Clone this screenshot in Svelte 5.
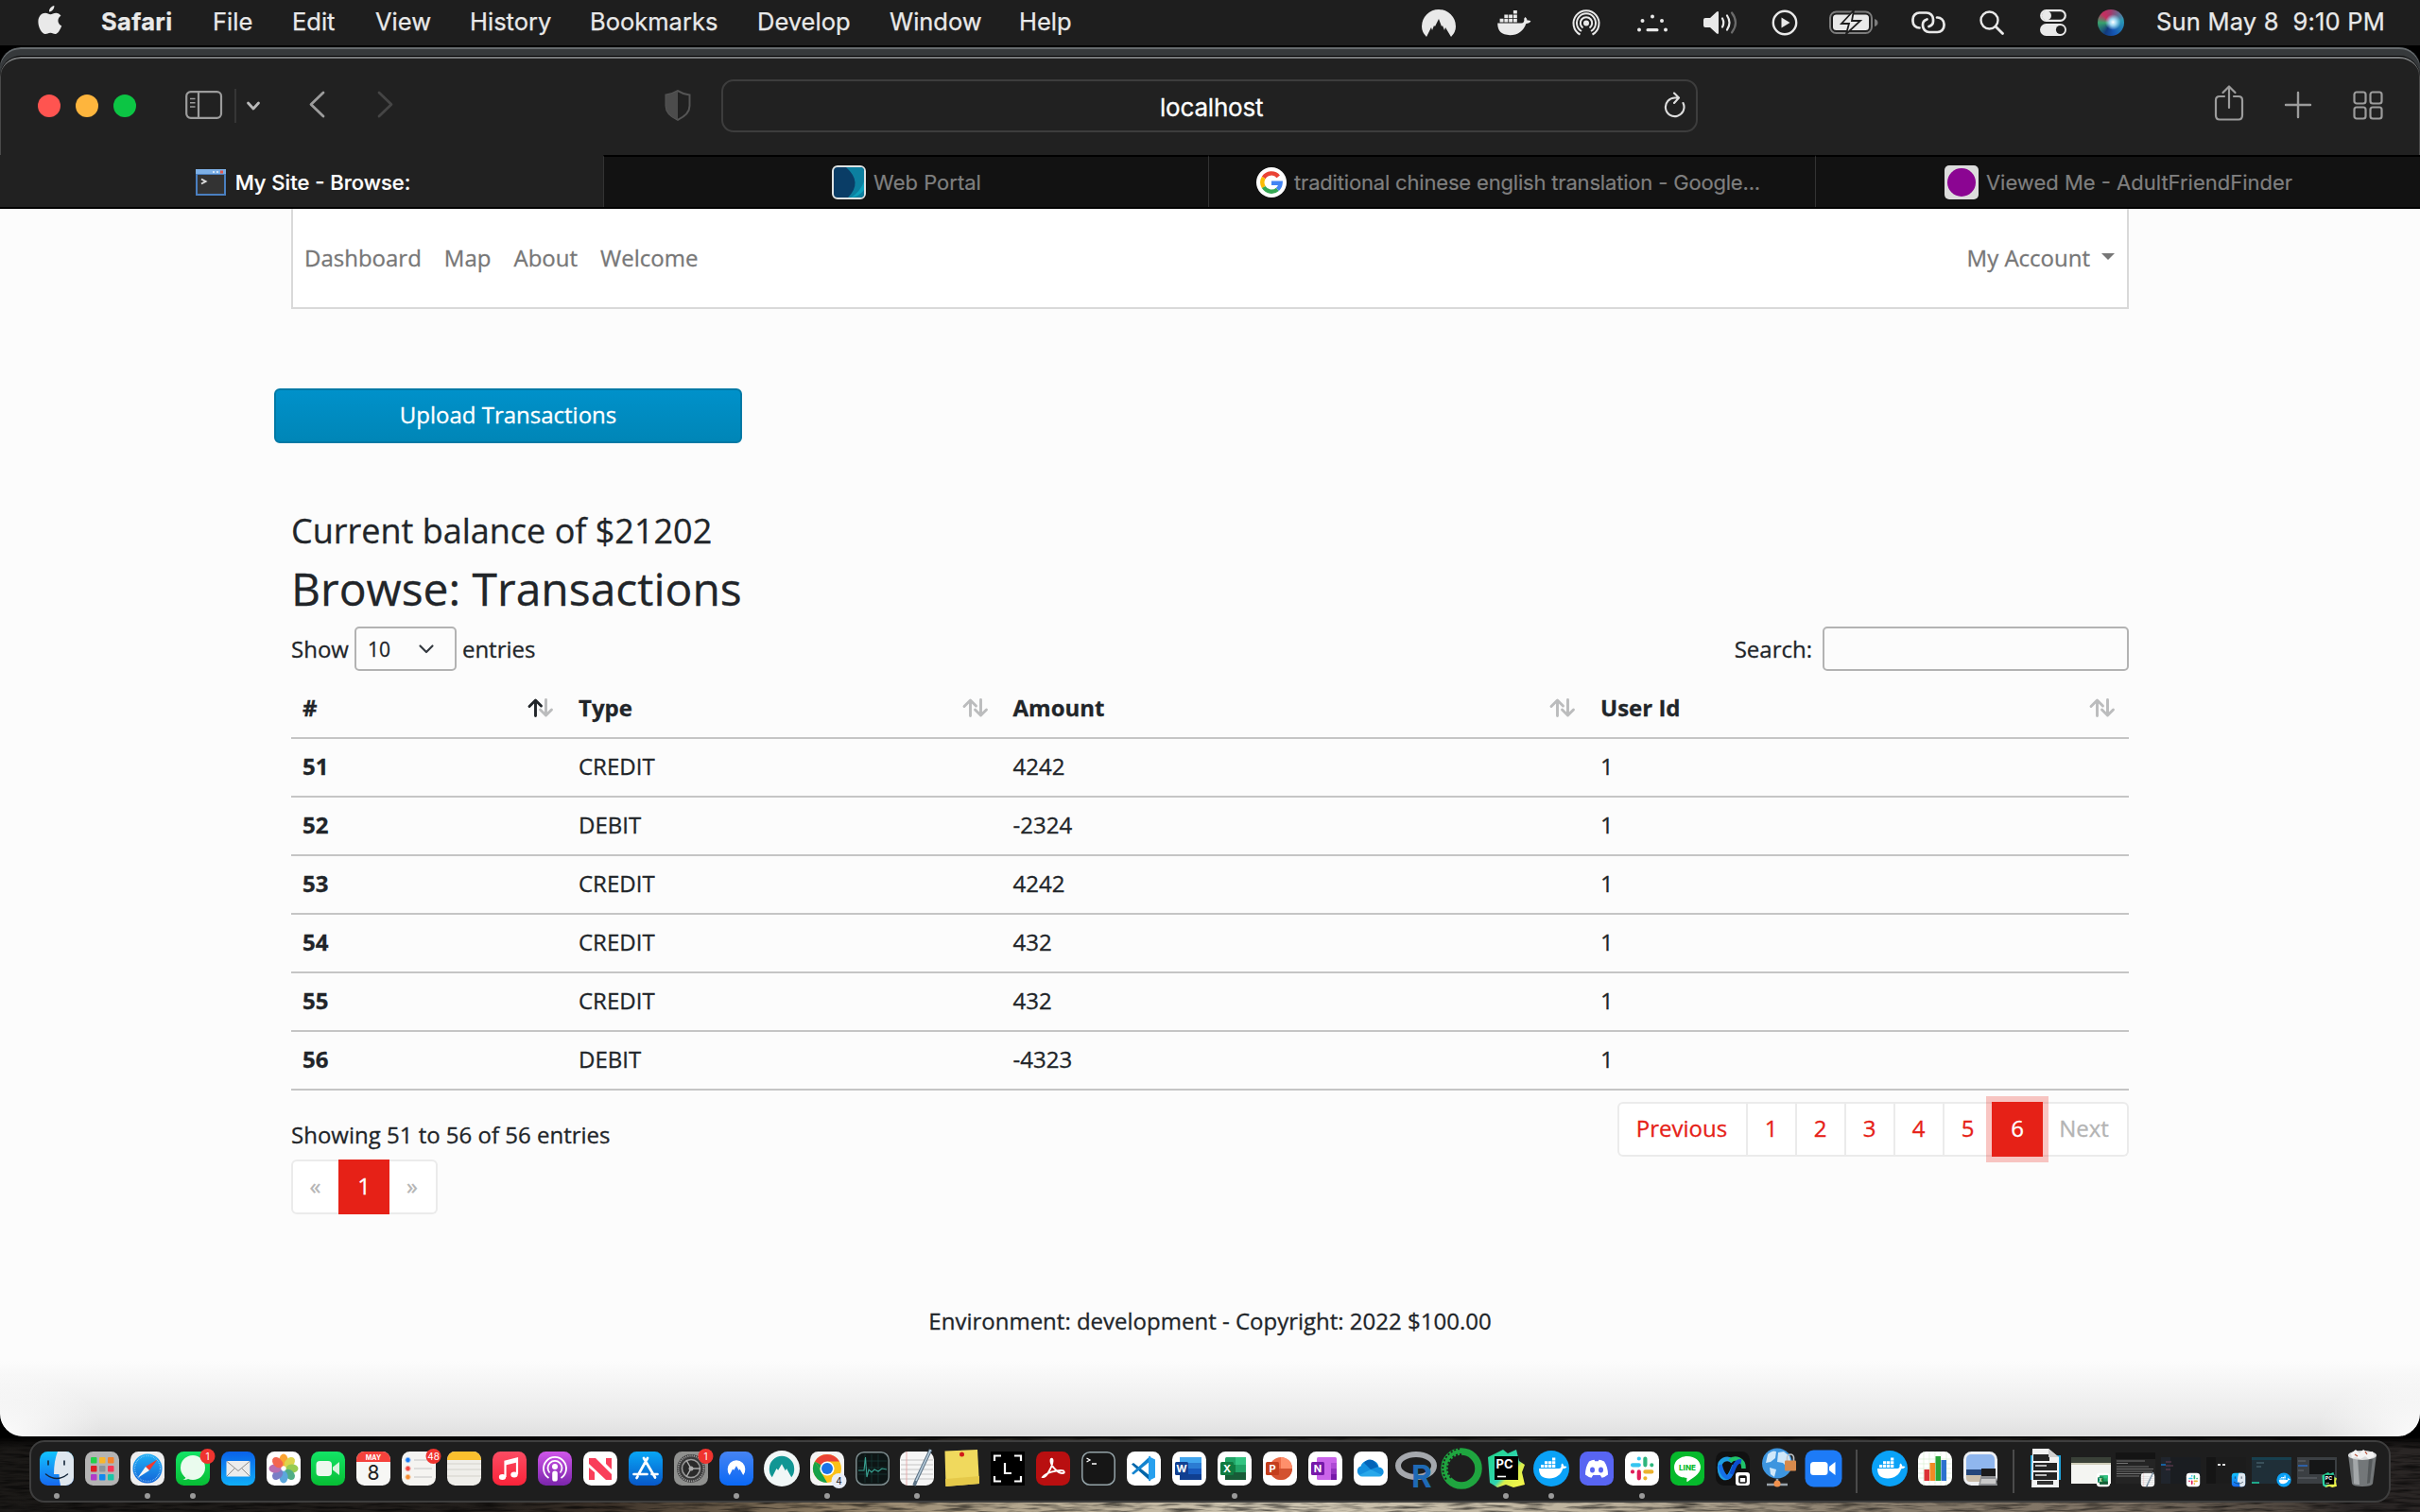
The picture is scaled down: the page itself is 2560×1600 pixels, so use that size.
<script>
  const menus = ['File', 'Edit', 'View', 'History', 'Bookmarks', 'Develop', 'Window', 'Help'];

  const rows = [
    [51, 'CREDIT', '4242', 1],
    [52, 'DEBIT', '-2324', 1],
    [53, 'CREDIT', '4242', 1],
    [54, 'CREDIT', '432', 1],
    [55, 'CREDIT', '432', 1],
    [56, 'DEBIT', '-4323', 1]
  ];
  const columns = ['#', 'Type', 'Amount', 'User Id'];

  // Rounded app tile, 36 units wide inside a 40 unit box
  const tile = (fill, inner = '') => `<rect x="2" y="2" width="36" height="36" rx="8.5" fill="${fill}"/>${inner}`;
  const whale = (fill) =>
    `<path fill="${fill}" d="M7 20h21c2 0 3-1.500 2.500-4l1-1.500c1.300 1 1.700 2 1.700 3 1.300-.3 2.500 0 3.300.6-.8 1.700-2.300 2.200-4.200 2.200C30 27 25 30.500 18 30.500 10.500 30.500 7 27 7 20z"/><path fill="${fill}" d="M9 16h3.300v3H9zM13 16h3.300v3H13zM17 16h3.300v3H17zM21 16h3.300v3H21zM13 12.300h3.300v3H13zM17 12.300h3.300v3H17zM21 12.300h3.300v3H21zM21 8.600h3.300v3H21z"/>`;
  const peaks = 'M8 31 Q4 26 4.500 20 A15.500 15.500 0 0 1 35.500 20 Q36 26 32 31 L26 20 24.500 22.500 20 14.500 15.500 22 13.500 20z';
  const badge = (n) => `<circle cx="35.500" cy="7" r="8" fill="#f0342f"/><text x="35.500" y="10.600" font-size="10" fill="#fff" text-anchor="middle">${n}</text>`;
  const office = (dark, letter, shape) =>
    tile('#fff', `${shape}<rect x="5" y="13" width="14" height="14" rx="1.500" fill="${dark}"/><text x="12" y="24" font-size="11" font-weight="700" fill="#fff" text-anchor="middle">${letter}</text>`);
  const finderArt = tile('url(#gFinder)', `<path d="M21 2h8.500A8.500 8.500 0 0 1 38 10.500v19a8.500 8.500 0 0 1-8.500 8.500H24q-1.500-6-1.500-12H17Q17 12 21 2z" fill="#dfe7ef"/><path d="M11 12v4M28 12v4" stroke="#14263a" stroke-width="1.600" stroke-linecap="round"/><path d="M8.500 26q11.500 9 23 0" fill="none" stroke="#14263a" stroke-width="1.500" stroke-linecap="round"/>`);
  const slackArt = tile('#fff', `<g stroke-width="4.200" stroke-linecap="round"><path d="M16.800 9.500h.01M16.800 16.300H10" stroke="#36c5f0"/><path d="M23.400 9.500v6.800M30.300 16.300h.01" stroke="#2eb67d"/><path d="M23.400 23.400h6.900M23.400 30.300h.01" stroke="#ecb22e"/><path d="M16.800 23.400v6.900M10 23.400h.01" stroke="#e01e5a"/></g>`);
  const pycharmArt = `<path d="M1 8 17 0l5 4 9-4 3 12 6 4-3 8 3 13-12 3-8-3-9 3-8-5z" fill="url(#gPy)"/><rect x="8" y="7" width="25" height="25" fill="#000"/><text x="9.500" y="20" font-size="13" font-weight="700" fill="#fff">PC</text><path d="M11 28.500h9" stroke="#fff" stroke-width="1.600"/>`;
  const dockerArt = `<circle cx="20" cy="20" r="19" fill="#0aa2f7"/>${whale('#fff')}`;
  const editArt = tile('#f6f6f6', `<path d="M3 11h34M3 16h34M3 21h34M3 26h34M3 31h34" stroke="#b9b9b9" stroke-width=".8"/><path d="M9 2v36" stroke="#e7a0a0" stroke-width=".8"/><path d="M34.500 0 19 33l-2 5" stroke="#5d7386" stroke-width="3.600"/><path d="M34.500 0 19 33" stroke="#bdd1df" stroke-width="1.500"/>`);
  const excelArt = office('#107c41', 'X', '<rect x="10" y="8" width="22" height="24" rx="1.500" fill="#21a366"/><path d="M21 8h11v8H21z" fill="#33c481"/><path d="M10 16h11v8H10z" fill="#107c41"/><path d="M10 24h22v8H10z" fill="#185c37"/>');

  const thumb = (bg, inner, app) =>
    `<rect x="-1" y="8" width="42" height="28" fill="${bg}"/>${inner}<g transform="translate(25 24) scale(.4)">${app}</g>`;

  const apps = [
    { art: finderArt, open: true },
    { art: tile('#b4b4b4', '<rect x="8" y="8" width="6.500" height="6.500" rx="1" fill="#23d14b"/><rect x="17" y="8" width="6.500" height="6.500" rx="1" fill="#f8b62c"/><rect x="26" y="8" width="6.500" height="6.500" rx="1" fill="#f5822a"/><rect x="8" y="17" width="6.500" height="6.500" rx="1" fill="#e01e26"/><rect x="17" y="17" width="6.500" height="6.500" rx="1" fill="#8c959b"/><rect x="26" y="17" width="6.500" height="6.500" rx="1" fill="#f83657"/><rect x="8" y="26" width="6.500" height="6.500" rx="1" fill="#b03bc9"/><rect x="17" y="26" width="6.500" height="6.500" rx="1" fill="#1288ee"/><rect x="26" y="26" width="6.500" height="6.500" rx="1" fill="#18c5a6"/>') },
    { art: tile('#eeeeef', '<circle cx="20" cy="20" r="15.500" fill="url(#gBlue)"/><circle cx="20" cy="20" r="13.500" fill="none" stroke="#9fd3f7" stroke-width="1.300" stroke-dasharray=".6 1.100"/><path d="M30.500 10.500 18 18l4 4z" fill="#f2392f"/><path d="M9.500 30 22 22l-4-4z" fill="#f4f4f4"/>'), open: true },
    { art: tile('url(#gGreen)', `<circle cx="20" cy="19" r="13" fill="#eafbee"/><path d="M13 27q0 4-3.500 5 5 .5 8-3z" fill="#e3f8e8"/>${badge('1')}`), open: true },
    { art: tile('url(#gMail)', '<rect x="7.500" y="12" width="25" height="16.500" rx="1" fill="#ececec"/><path d="m8 12.500 12 10 12-10M8 28l8.500-8.500M32 28l-8.500-8.500" fill="none" stroke="#8d8d8d" stroke-width="1"/>') },
    { art: tile('#fff', '<g opacity=".9"><ellipse cx="20" cy="11" rx="4.600" ry="6.500" fill="#fb9b1c"/><ellipse cx="20" cy="11" rx="4.600" ry="6.500" fill="#d9d03a" transform="rotate(45 20 20)"/><ellipse cx="20" cy="11" rx="4.600" ry="6.500" fill="#8cc63f" transform="rotate(90 20 20)"/><ellipse cx="20" cy="11" rx="4.600" ry="6.500" fill="#3fa578" transform="rotate(135 20 20)"/><ellipse cx="20" cy="11" rx="4.600" ry="6.500" fill="#4a9ed9" transform="rotate(180 20 20)"/><ellipse cx="20" cy="11" rx="4.600" ry="6.500" fill="#6b6fc0" transform="rotate(225 20 20)"/><ellipse cx="20" cy="11" rx="4.600" ry="6.500" fill="#b25fa8" transform="rotate(270 20 20)"/><ellipse cx="20" cy="11" rx="4.600" ry="6.500" fill="#f2553d" transform="rotate(315 20 20)"/></g>') },
    { art: tile('url(#gGreen)', '<rect x="7.500" y="12" width="16.500" height="16" rx="4" fill="#edf8ef"/><path d="M25 18.500 32 13v14l-7-5.500z" fill="#d8f3dd"/>') },
    { art: tile('#f7f7f5', '<path d="M2 13v-2.500A8.500 8.500 0 0 1 10.500 2h19A8.500 8.500 0 0 1 38 10.500V13z" fill="#f5423c"/><text x="20" y="10.800" font-size="7" font-weight="700" fill="#fff" text-anchor="middle">MAY</text><text x="20" y="32" font-size="21" fill="#222" text-anchor="middle">8</text>') },
    { art: tile('#f5f4f1', `<path d="M15 11h19M15 20h19M15 29h19" stroke="#c4c4c4" stroke-width="1"/><circle cx="8.500" cy="11" r="2.700" fill="#1679f6" stroke="#a9cbf6"/><circle cx="8.500" cy="20" r="2.700" fill="#f3433e" stroke="#f6b5b2"/><circle cx="8.500" cy="29" r="2.700" fill="#f68b30" stroke="#f6d0ab"/>${badge('48')}`) },
    { art: tile('#efeeea', '<path d="M2 11v-.5A8.500 8.500 0 0 1 10.500 2h19A8.500 8.500 0 0 1 38 10.500V11z" fill="#fbc02e"/><path d="M2 15h36M2 21h36M2 28h36" stroke="#d3d1ca" stroke-width="1"/>') },
    { art: tile('url(#gMusic)', '<path d="M15.500 29V12.500L28 9.500V26" fill="none" stroke="#fff" stroke-width="2.200"/><path d="M15.500 13 28 10v3.500l-12.500 3z" fill="#fff"/><ellipse cx="12.500" cy="29" rx="3.700" ry="3" fill="#fff"/><ellipse cx="25" cy="26.500" rx="3.700" ry="3" fill="#fff"/>') },
    { art: tile('url(#gPod)', '<g fill="none" stroke="#fff" stroke-width="1.800"><path d="M13.500 30a12 12 0 1 1 13 0"/><path d="M14.500 24.500a7.500 7.500 0 1 1 11 0"/></g><circle cx="20" cy="18" r="3" fill="#fff"/><rect x="17.200" y="22.500" width="5.600" height="11" rx="2.600" fill="#fff"/>') },
    { art: tile('#fff', '<path d="M8 9h7l17 17v6h-6L8 15z" fill="#f93e5a"/><path d="M8 19v13h6V24zM32 21V9h-6v6z" fill="#f93e5a"/>') },
    { art: tile('url(#gStore)', '<path d="m22 9-9.500 17M18 9l12 20.500M7.500 26h14M26.500 26h6M11.500 28.500 10.500 30" stroke="#fff" stroke-width="2.700" stroke-linecap="round"/>') },
    { art: tile('#8f908e', `<circle cx="20" cy="20" r="15" fill="#3b3b3b"/><circle cx="20" cy="20" r="13.500" fill="none" stroke="#9c9c9c" stroke-width="2" stroke-dasharray="1.200 1"/><circle cx="20" cy="20" r="9.500" fill="#2a2a2a" stroke="#9c9c9c" stroke-width="1.500"/><path d="M20 20 15 11M20 20h10M20 20l-5 9" stroke="#aaa" stroke-width="1.500"/><circle cx="20" cy="20" r="2.500" fill="#aaa"/>${badge('1')}`) },
    { art: tile('url(#gNord)', `<g transform="translate(8 8.500) scale(.6)"><path d="${peaks}" fill="#fff"/></g>`), open: true },
    { art: `<circle cx="20" cy="20" r="19" fill="#f1f7f7"/><g transform="translate(3 3) scale(.85)"><path d="${peaks}" fill="#119694"/></g>` },
    { art: tile('#f4f4f4', '<circle cx="20" cy="20" r="15" fill="#fbc116"/><path d="M20 20 7 12.500A15 15 0 0 1 33 12.500H20z" fill="#ea4335"/><path d="M7 12.500 20 35A15 15 0 0 1 7 12.500z" fill="#15a24a"/><path d="m7 12.500 6.500 11.300L20 20z" fill="#15a24a"/><circle cx="20" cy="20" r="7.600" fill="#fff"/><circle cx="20" cy="20" r="6" fill="#1a73e8"/><circle cx="32.500" cy="33" r="8" fill="#e8edf7"/><text x="32.500" y="36.500" font-size="10" fill="#222" text-anchor="middle">4</text>'), open: true },
    { art: tile('#0d1515', '<rect x="2.800" y="2.800" width="34.400" height="34.400" rx="8" fill="none" stroke="#7e8c8e" stroke-width="1.500"/><path d="M5 12h30M5 19h30M5 26h30M12 5v30M19 5v30M26 5v30" stroke="#183c39" stroke-width=".7"/><path d="M5 22h6l1.500-14L14 29l2-8 3 3 3-3 4 2 4-3 5 1" fill="none" stroke="#39a493" stroke-width="1.100"/>') },
    { art: editArt, open: true },
    { art: '<path d="M1.500 1.500 36 0l2 36L2.500 39z" fill="#f0d95d"/><path d="M2 31 38 28v8L2.500 39z" fill="#e5c94a"/><circle cx="19.500" cy="5" r="2.500" fill="#d21a1a"/>' },
    { art: '<rect x="2" y="2" width="36" height="36" fill="#000"/><path d="M6 12V6.500h7M27 6.500h7V12M6 28v5.500h7M27 33.500h7V28" fill="none" stroke="#fff" stroke-width="2.200"/><path d="M17 14v11h7" fill="none" stroke="#fff" stroke-width="2.200"/>' },
    { art: tile('#b90f10', '<path d="M9 29c3 1 10-9 10.500-17 .2-3-2-3-2 0 .2 6 8 13 12.500 13 3 0 2-3-1-3-6-.2-16 2-20 7z" fill="none" stroke="#fff" stroke-width="1.900"/>') },
    { art: tile('#161616', '<rect x="2.800" y="2.800" width="34.400" height="34.400" rx="8" fill="none" stroke="#94a3a8" stroke-width="1.500"/><path d="m7.500 9 3.500 2-3.500 2M13 15h5" fill="none" stroke="#fff" stroke-width="1.300"/>') },
    { art: tile('#fff', '<path d="M7 15.500 9 14l18 14v5.500z" fill="#0065a9"/><path d="M7 25 9 26.500 27 12V6.500z" fill="#1383cf"/><path d="m25 7 7 3.500v19L25 33z" fill="#27a0ee"/>') },
    { art: office('#103f91', 'W', '<rect x="10" y="8" width="23" height="24" rx="1.500" fill="#2b7cd3"/><path d="M10 8h23v6H10z" fill="#41a5ee"/><path d="M10 20h23v6H10z" fill="#185abd"/><path d="M10 26h23v6H10z" fill="#103f91"/>') },
    { art: excelArt, open: true },
    { art: office('#c43e1c', 'P', '<circle cx="21" cy="20" r="12" fill="#ed6c47"/><path d="M21 8a12 12 0 0 1 12 12H21z" fill="#ff8f6b"/><path d="M9 20h24a12 12 0 0 1-24 0z" fill="#d35230"/>') },
    { art: office('#7719aa', 'N', '<rect x="11" y="8" width="21" height="24" rx="1.500" fill="#ca64ea"/><path d="M26 14h6v6h-6z" fill="#ae4bd5"/><path d="M26 20h6v6h-6z" fill="#9332bf"/><path d="M26 26h6v6h-6z" fill="#7719aa"/>') },
    { art: tile('#fff', '<path d="M10 28a5.500 5.500 0 0 1-.5-10.500 7 7 0 0 1 8-5.500 8 8 0 0 1 11 6.500c7 .5 6.500 9.500 1 9.500z" fill="#1490df"/><path d="M13 14c2-4 9-5 12 0l3 4-8 3z" fill="#0364b8"/><path d="m8 27 12-6 12 6q-1 1.500-3 1.500H11Q9 28.500 8 27z" fill="#28a8ea"/>') },
    { art: '<ellipse cx="20" cy="17" rx="19" ry="12" fill="none" stroke="#a5a8ad" stroke-width="6"/><text x="15" y="40" font-size="33" font-weight="700" fill="#1f6ab5">R</text>' },
    { art: '<circle cx="20" cy="20" r="18" fill="none" stroke="#1fa53f" stroke-width="7.500"/><path d="M18-1A21 21 0 0 0 5 33" fill="none" stroke="#1e1e1e" stroke-width="1.800" stroke-dasharray="2 2"/><path d="M20 5A15 15 0 0 0 9 30" fill="none" stroke="#1e1e1e" stroke-width="2" stroke-dasharray="2 2"/>' },
    { art: pycharmArt, open: true },
    { art: dockerArt, open: true },
    { art: tile('#5865f2', '<path d="M12 12.500q3-1.500 5.500-1.700l.8 1.500h3.400l.8-1.500q2.500.2 5.500 1.700 4 6 4 14-3 2.500-6.500 3.200l-1.700-2.700h-7.600L14.500 29.700Q11 29 8 26.500q0-8 4-14z" fill="#fff"/><ellipse cx="15.500" cy="21.500" rx="2.500" ry="2.900" fill="#5865f2"/><ellipse cx="24.500" cy="21.500" rx="2.500" ry="2.900" fill="#5865f2"/>') },
    { art: slackArt, open: true },
    { art: tile('#06b92c', '<path d="M20 7c8 0 14 5 14 11.500C34 26 24 31 20 34c-.5.300-1-.3-.5-4C11 30 6 25 6 18.500 6 12 12 7 20 7z" fill="#fff"/><text x="20" y="22" font-size="8" font-weight="800" fill="#06b92c" text-anchor="middle">LINE</text>') },
    { art: tile('#111', '<path d="M20 12.500C14 7 6 11 6 19c0 6 2.500 11 6.500 11 4.500 0 6-6 9-13" fill="none" stroke="#1f9de0" stroke-width="4.600"/><path d="M6.500 16C9 28 15 33 18 26" fill="none" stroke="#1470e8" stroke-width="4.600"/><path d="M17 12c5-5 15-2 14.500 8" fill="none" stroke="#20c36b" stroke-width="4.600"/><path d="M29 12.500c-6-1-8 7-10.500 13.500" fill="none" stroke="#0b4fd1" stroke-width="4.600"/><rect x="23" y="24" width="15" height="14" rx="3" fill="#fff"/><rect x="27" y="28" width="7" height="7" rx="1" fill="none" stroke="#111" stroke-width="1.600"/><path d="M27 29h7" stroke="#111" stroke-width="2"/>') },
    { art: '<circle cx="19" cy="14.500" r="16" fill="#3d95df"/><path d="M9 5q5-5 9-3l-1 7-5 4-5 1zM20 3l6-1 6 5 2 8-4 4-5-5-6-1zM11 19l7 2-2 8-4-3z" fill="#cfe8fa"/><path d="M19 31v5M8 37h22" stroke="#9aa3aa" stroke-width="2.500"/><circle cx="19" cy="36" r="3.500" fill="#f1914d"/><path d="M29.500 12V8.500a3.500 3.500 0 0 1 7 0V12" fill="none" stroke="#bfc4c8" stroke-width="1.700"/><rect x="27" y="11.500" width="12" height="11" rx="1" fill="#d88a4c"/>' },
    { art: '<rect x=".5" y=".5" width="39" height="39" rx="9" fill="#1d7bf7"/><rect x="6" y="13" width="18.500" height="14" rx="3.500" fill="#fff"/><path d="m26 18 6.500-5v14L26 22z" fill="#fff"/>' }
  ];

  const recents = [
    { art: dockerArt },
    { art: tile('#fff', '<path d="M2 10h36M2 15h36M2 20h36M2 25h36M2 30h36M8 2v36M14 2v36M20 2v36M26 2v36M32 2v36" stroke="#d8efd3" stroke-width=".7"/><path d="M8.500 21H14v12H8.500z" fill="#dd3237"/><path d="M14.500 14H20v19h-5.500z" fill="#f28a25"/><path d="M20.500 7H26v26h-5.500z" fill="#28a537"/><path d="M26.500 11H32v22h-5.500z" fill="#2d72cf"/>') },
    { art: tile('#eef0f3', '<path d="M5 10a5 5 0 0 1 5-5h20a5 5 0 0 1 5 5v14H5z" fill="#8fb6ee"/><path d="M5 21h30v7H5z" fill="#24477c"/><path d="M5 27h25v7H9q-4 0-4-4z" fill="#c9bda9"/><path d="M22 22h13l3 16H18z" fill="#8d8f92"/><path d="M21 20h15v8H21z" fill="#1b1b1c"/><path d="M21 31h15v5H20z" fill="#c9c9c9"/>') }
  ];

  const minimized = [
    { art: '<path d="M4 6h32v26H4z" fill="#1ea4dd"/><path d="M6-1h17l11 9v32H5z" fill="#f2f2f2"/><path d="M7 5h17v7H7zM7 14h25v8H7zM7 24h25v8H7z" fill="#242424"/><path d="M9 17h12M9 27h12" stroke="#bbb" stroke-width="2"/><path d="M11 35h17" stroke="#333" stroke-width="4"/><path d="M23-1v9h11z" fill="#cfcfcf"/>' },
    { art: thumb('#f4f5f2', '<path d="M-1 8h42v6H-1z" fill="#3a4138"/><path d="M-1 14h42v2H-1z" fill="#cfcdb9"/>', excelArt) },
    { art: thumb('#242424', '<path d="M-1 3h42v7H-1z" fill="#141414"/><path d="M0 12h30M0 14.500h12M0 18h34M0 20.500h39M0 23h38M0 25.500h36M0 28h24" stroke="#858585" stroke-width=".8"/>', editArt) },
    { art: thumb('#1a1d21', '<path d="M-1 8h10v28H-1z" fill="#20252d"/><path d="M4 13h6M4 17h8M4 21h5" stroke="#6c4159" stroke-width="1"/><path d="M-1 16h5" stroke="#1673c4" stroke-width="1.500"/>', slackArt) },
    { art: thumb('#1c1c1c', '<path d="M-1 8h10v28H-1z" fill="#151515"/><path d="M11 15h3v2h-3zM16 15h3v2h-3z" fill="#ddd"/>', finderArt) },
    { art: thumb('#1f2f38', '<path d="M-1 8h42v3H-1z" fill="#17404f"/><path d="M4 14h8M4 18h5" stroke="#55727d" stroke-width="1"/><path d="M-1 35h8" stroke="#1fa88a" stroke-width="2"/>', dockerArt) },
    { art: thumb('#3b3f43', '<path d="M12 11h27v15H12z" fill="#151617"/><path d="M0 17h10" stroke="#2c6cc5" stroke-width="1.500"/><path d="M0 12h8M0 22h6M0 30h20" stroke="#676b70" stroke-width="1"/>', pycharmArt) },
    { art: '<path d="M5 5h30l-4 31q-1 3-11 3T9 36z" fill="#737779"/><path d="M10 8h5l2 29q-4 0-6-1z" fill="#a3a7a9"/><path d="M27 8h4l-3 27-3 1z" fill="#55595b"/><ellipse cx="20" cy="6" rx="15" ry="5" fill="#d9dadb"/><path d="m8 4 5-4 4 4 4-4 5 3 5-1 2 5-6 3-4-3-5 3-5-2-4 1z" fill="#f3f3f3"/><path d="m12 5 3 2M23 2l2 3" stroke="#b8543c" stroke-width="1.300"/>' }
  ];
</script>

{#snippet dockItem(app)}
  <div class="dock-item">
    <svg class="dock-art" viewBox="0 0 40 40">{@html app.art}</svg>
    <span class="dot" class:on={app.open}></span>
  </div>
{/snippet}

<div class="screen">
  <svg class="defs" width="0" height="0" aria-hidden="true">
    <defs>
      <linearGradient id="gFinder" x2="0" y2="1"><stop stop-color="#12c3fd" /><stop offset="1" stop-color="#1668ef" /></linearGradient>
      <linearGradient id="gBlue" x2="0" y2="1"><stop stop-color="#1fb0f7" /><stop offset="1" stop-color="#1365d8" /></linearGradient>
      <linearGradient id="gGreen" x2="0" y2="1"><stop stop-color="#13e466" /><stop offset="1" stop-color="#07bd34" /></linearGradient>
      <linearGradient id="gMail" x2="0" y2="1"><stop stop-color="#0a62ea" /><stop offset="1" stop-color="#10aef8" /></linearGradient>
      <linearGradient id="gMusic" x2="0" y2="1"><stop stop-color="#fb4c63" /><stop offset="1" stop-color="#fa2339" /></linearGradient>
      <linearGradient id="gPod" x2="0" y2="1"><stop stop-color="#d056ea" /><stop offset="1" stop-color="#7a25ab" /></linearGradient>
      <linearGradient id="gStore" x2="0" y2="1"><stop stop-color="#08a6f5" /><stop offset="1" stop-color="#0757c9" /></linearGradient>
      <linearGradient id="gNord" x2="0" y2="1"><stop stop-color="#4684f3" /><stop offset="1" stop-color="#0a68f5" /></linearGradient>
      <linearGradient id="gPy" x2="1" y2="1"><stop stop-color="#21d789" /><stop offset=".55" stop-color="#2fd3b0" /><stop offset=".65" stop-color="#d9ef4c" /><stop offset="1" stop-color="#fcf84a" /></linearGradient>
      <filter id="grain" x="0" y="0" width="1" height="1">
        <feTurbulence type="fractalNoise" baseFrequency="0.03 0.35" numOctaves="3" seed="4" />
        <feColorMatrix values="0 0 0 0 0  0 0 0 0 0  0 0 0 0 0  2.600 0 0 0 -1.100" />
      </filter>
    </defs>
  </svg>

  <header class="menubar">
    <svg class="apple" viewBox="0 0 26 32"><path fill="#e9e9e9" d="M17.500 0c.3 3.600-2.600 6.700-5.500 6.700C11.600 3.500 14.500.4 17.500 0zM24.800 11c-4.500 2.700-3.900 8.900.8 10.900-1.300 3.800-4 8.900-6.700 9-2.200.1-2.900-1.300-5.500-1.300s-3.500 1.300-5.500 1.300C4 31 0 23.500 0 17.500 0 11.300 4 8 7.800 8c2.300 0 4 1.500 5.600 1.500C15 9.500 17 7.800 19.700 7.900c1.800.1 3.900 1 5.100 3.100z" /></svg>
    <b class="app-name">Safari</b>
    {#each menus as m}<span>{m}</span>{/each}
    <div class="status">
      <svg width="36" height="29" viewBox="0 0 36 29"><path fill="#e9e9e9" d="M5 29Q0 24 0 18a18 18 0 0 1 36 0q0 6-5 11l-6-10-1 3-2-5-1 1-3-8-4 8-1-1-2 5-1-3z" /></svg>
      <svg width="37" height="30" viewBox="6 7.500 31 24">{@html whale('#e9e9e9')}</svg>
      <svg width="30" height="30" viewBox="0 0 30 30"><g fill="none" stroke="#e9e9e9" stroke-width="2"><path d="M8.500 27.500a13.500 13.500 0 1 1 13 0" /><path d="M10 24a10 10 0 1 1 10 0" /><path d="M11.500 20.500a6.200 6.200 0 1 1 7 0" /></g><circle cx="15" cy="15.500" r="3" fill="#e9e9e9" /></svg>
      <svg width="32" height="20" viewBox="0 0 32 20"><g fill="#e9e9e9"><circle cx="2" cy="17.500" r="2" /><circle cx="30" cy="17.500" r="2" /><circle cx="5.500" cy="8" r="2" /><circle cx="26" cy="8" r="2" /><circle cx="16" cy="3.500" r="2" /><rect x="9.500" y="16" width="13" height="3.200" rx="1.500" /></g></svg>
      <svg width="36" height="26" viewBox="0 0 36 26"><path fill="#e9e9e9" d="M2 8h5l7-6.500q2-1.200 2 1v21q0 2.200-2 1L7 18H2q-2 0-2-2v-6q0-2 2-2z" /><g fill="none" stroke-width="2.200" stroke-linecap="round" stroke="#e9e9e9"><path d="M20 8.500q2.500 4.500 0 9" /><path d="M25 5.500q5 7.500 0 15" /><path stroke="#6b6b6b" d="M30 2.500q8 10.500 0 21" /></g></svg>
      <svg width="28" height="28" viewBox="0 0 28 28"><circle cx="14" cy="14" r="12.200" fill="none" stroke="#e9e9e9" stroke-width="2.400" /><path fill="#e9e9e9" d="M10.500 8.500v11l9-5.500z" /></svg>
      <svg width="52" height="26" viewBox="0 0 52 26"><rect x="1" y="1.500" width="44" height="22.500" rx="6.500" fill="none" stroke="#7c7c7c" stroke-width="2" /><rect x="4" y="4.500" width="38" height="16.500" rx="3.500" fill="#e9e9e9" /><path fill="#7c7c7c" d="M48 9q3.500 1 3.500 4T48 17z" /><path d="M26 0 13 14h8l-3 11 15-14h-9z" fill="#e9e9e9" stroke="#1e1e1e" stroke-width="1.800" /></svg>
      <svg width="36" height="24" viewBox="0 0 36 24"><g fill="none" stroke="#e9e9e9" stroke-width="2.700" stroke-linecap="round"><path d="M8.500 17.500A7 7 0 0 1 1.500 10.500V8.500A7 7 0 0 1 8.500 1.500h7.500A7 7 0 0 1 23 8.500v2q0 4-4.500 5.500" /><path d="M27 6.500a7 7 0 0 1 7.500 7v1.500a7 7 0 0 1-7 7h-8.500a7 7 0 0 1-7-7v-1q0-4 4.500-5.500" /></g></svg>
      <svg width="26" height="26" viewBox="0 0 26 26"><circle cx="10.500" cy="10.500" r="9" fill="none" stroke="#e9e9e9" stroke-width="2.400" /><path d="m17 17 7.500 7.500" stroke="#e9e9e9" stroke-width="2.800" stroke-linecap="round" /></svg>
      <svg width="28" height="28" viewBox="0 0 28 28"><rect x="1.200" y="1.200" width="25.600" height="10.600" rx="5.300" fill="none" stroke="#e9e9e9" stroke-width="2.200" /><circle cx="7" cy="6.500" r="5" fill="#e9e9e9" /><rect y="15" width="28" height="13" rx="6.500" fill="#e9e9e9" /><circle cx="21.500" cy="21.500" r="4.600" fill="#1e1e1e" /></svg>
      <span class="siri"></span>
    </div>
    <span class="clock">Sun May 8&nbsp; 9:10 PM</span>
  </header>

  <div class="rear">
    <div class="window">
      <div class="toolbar">
        <div class="lights"><i class="r"></i><i class="y"></i><i class="g"></i></div>
        <svg class="sidebar" viewBox="0 0 40 30"><g fill="none" stroke="#9c9c9c"><rect x="1.200" y="1.200" width="36.800" height="27.600" rx="4.500" stroke-width="2.200" /><path d="M14 1v28" stroke-width="2.200" /><path d="M5 8.500h5.500M5 12.800h5.500M5 17h5.500" stroke-width="1.500" /></g></svg>
        <i class="sep"></i>
        <svg class="chev" viewBox="0 0 14 10"><path d="m1.500 2 5.500 6 5.500-6" fill="none" stroke="#b9b9b9" stroke-width="2.800" stroke-linecap="round" stroke-linejoin="round" /></svg>
        <svg class="back" viewBox="0 0 17 29"><path d="M15 2 2 14.500 15 27" fill="none" stroke="#9c9c9c" stroke-width="2.800" stroke-linecap="round" stroke-linejoin="round" /></svg>
        <svg class="fwd" viewBox="0 0 17 29"><path d="m2 2 13 12.500L2 27" fill="none" stroke="#454545" stroke-width="2.800" stroke-linecap="round" stroke-linejoin="round" /></svg>
        <svg class="shield" viewBox="0 0 28 33"><path d="M14 1.200Q20 5 26.500 5.500V17q0 9-12.500 14.800Q1.500 26 1.500 17V5.500Q8 5 14 1.200z" fill="none" stroke="#555" stroke-width="2" /><path d="M14 1.200V31.800Q1.500 26 1.500 17V5.500Q8 5 14 1.200z" fill="#4c4c4c" /></svg>
        <div class="url">
          <span>localhost</span>
          <svg viewBox="0 0 24 28"><path d="M20.500 12A9.800 9.800 0 1 1 12 6.500h3M11 1.500l5 5-5 5.500" fill="none" stroke="#dedede" stroke-width="2.100" stroke-linecap="round" stroke-linejoin="round" /></svg>
        </div>
        <svg class="share" viewBox="0 0 30 38"><path d="M10 12H5q-4 0-4 4v16q0 4.500 4 4.500h20q4 0 4-4.500V16q0-4-4-4h-5M15 24V2M8.500 8 15 1.500 21.500 8" fill="none" stroke="#9c9c9c" stroke-width="2.200" stroke-linecap="round" stroke-linejoin="round" /></svg>
        <svg class="plus" viewBox="0 0 28 28"><path d="M14 1v26M1 14h26" stroke="#9c9c9c" stroke-width="2.400" stroke-linecap="round" /></svg>
        <svg class="gridico" viewBox="0 0 32 31"><g fill="none" stroke="#9c9c9c" stroke-width="2.200"><rect x="1.500" y="1.500" width="12" height="12" rx="2.500" /><rect x="18.500" y="1.500" width="12" height="12" rx="2.500" /><rect x="1.500" y="17.500" width="12" height="12" rx="2.500" /><rect x="18.500" y="17.500" width="12" height="12" rx="2.500" /></g></svg>
      </div>

      <div class="tabs">
        <div class="tab active">
          <svg width="32" height="28" viewBox="0 0 32 28"><rect width="32" height="28" fill="#4a7fc0" /><rect width="32" height="5" fill="#7db0e6" /><rect x="26" y="1.500" width="3" height="3" fill="#e2574c" /><path d="M18 3h7" stroke="#cfe2f7" stroke-width="2" stroke-dasharray="2 2" /><rect x="2" y="6" width="28" height="20" fill="#333" /><path d="m6 10.500 4.500 2.500L6 15.500" fill="none" stroke="#ddd" stroke-width="2" /></svg>
          <span class="t1">My Site - Browse:</span>
        </div>
        <div class="tab">
          <svg width="36" height="36" viewBox="0 0 36 36"><rect x="1" y="1" width="34" height="34" rx="5" fill="#0a3d66" stroke="#dfe3e3" stroke-width="2" /><path d="M15 2h15q4 0 4 4v24q0 4-4 4H17q16-16-2-32z" fill="#0c7f9f" /><path d="M34 17v9q-5 7-14 8 10-6 14-17z" fill="#0da0bb" /></svg>
          <span class="t2">Web Portal</span>
        </div>
        <div class="tab search-tab">
          <svg width="32" height="32" viewBox="0 0 32 32"><circle cx="16" cy="16" r="16" fill="#fff" /><g fill="none" stroke-width="4.400"><path d="M23.300 9.800A9.600 9.600 0 0 0 7.800 11" stroke="#ea4335" /><path d="M7.800 11a9.600 9.600 0 0 0 0 10" stroke="#fbbc05" /><path d="M7.800 21a9.600 9.600 0 0 0 14.600 2.300" stroke="#34a853" /><path d="M22.400 23.300a9.600 9.600 0 0 0 3.200-6.500H16" stroke="#4285f4" /></g></svg>
          <span class="t3">traditional chinese english translation - Google...</span>
        </div>
        <div class="tab">
          <svg width="36" height="36" viewBox="0 0 36 36"><rect width="36" height="36" rx="5" fill="#dcdcdc" /><circle cx="18" cy="18" r="15" fill="#8b0592" /></svg>
          <span class="t4">Viewed Me - AdultFriendFinder</span>
        </div>
      </div>

      <main class="page">
        <div class="container">
          <nav>
            <span>Dashboard</span><span>Map</span><span>About</span><span>Welcome</span>
            <span class="account">My Account<i class="caret"></i></span>
          </nav>
          <button class="upload">Upload Transactions</button>
          <h4>Current balance of $21202</h4>
          <h2>Browse: Transactions</h2>

          <div class="filters">
            <label>Show
              <span class="select">10
                <svg viewBox="0 0 16 10"><path d="m1.500 1.500 6.500 6.500 6.500-6.500" fill="none" stroke="#343a40" stroke-width="2.200" stroke-linecap="round" stroke-linejoin="round" /></svg>
              </span>
              entries</label>
            <label class="search">Search: <input type="text" /></label>
          </div>

          <table>
            <thead>
              <tr>
                {#each columns as c, i}
                  <th><div class="th"><span>{c}</span>
                    <svg viewBox="0 0 28 20"><g fill="none" stroke-width="2.900" stroke-linecap="round" stroke-linejoin="round"><path d="M19.500 1.500v16M13.500 12l6 6 6-6" stroke="#bbbcbd" /><path d="M8.500 18.500v-16M2 8.500l6.500-6.500 6 6" stroke={i === 0 ? '#212529' : '#bbbcbd'} /></g></svg>
                  </div></th>
                {/each}
              </tr>
            </thead>
            <tbody>
              {#each rows as r}
                <tr><th>{r[0]}</th><td>{r[1]}</td><td>{r[2]}</td><td>{r[3]}</td></tr>
              {/each}
            </tbody>
          </table>

          <div class="info">
            <span class="showing">Showing 51 to 56 of 56 entries</span>
            <ul class="pages">
              <li class="prev">Previous</li>
              {#each [1, 2, 3, 4, 5] as n}<li>{n}</li>{/each}
              <li class="current focus">6</li>
              <li class="next muted">Next</li>
            </ul>
          </div>
          <ul class="pages small">
            <li class="muted">«</li><li class="current">1</li><li class="muted">»</li>
          </ul>
          <footer>Environment: development - Copyright: 2022 $100.00</footer>
        </div>
      </main>
    </div>
  </div>

  <div class="desk">
    <svg class="wood"><rect width="2560" height="80" filter="url(#grain)" /></svg>
    <div class="dock">
      {#each apps as app}{@render dockItem(app)}{/each}
      <i class="rule wide"></i>
      {#each recents as app}{@render dockItem(app)}{/each}
      <i class="rule"></i>
      {#each minimized as app}{@render dockItem(app)}{/each}
    </div>
  </div>
</div>

<style>
  :global(body) { background: #1e1e1e; overflow: hidden; }
  .screen { width: 2560px; height: 1600px; display: flex; flex-direction: column; overflow: hidden; background: #000; font-family: Inter, "Liberation Sans", sans-serif; }
  .screen * { box-sizing: border-box; }
  .screen svg { display: block; flex: none; overflow: visible; }
  .screen .defs { height: 0; }

  .menubar { flex: none; height: 48px; background: #1e1e1e; color: #e9e9e9; display: grid; align-items: center; font-size: 25.500px; line-height: 46px; white-space: nowrap; -webkit-text-stroke: .25px;
    grid-template-columns: 107px 118px 84px 88px 100px 127px 177px 140px 137px 406px 797px auto; }
  .menubar > span, .app-name { padding-bottom: 2px; }
  .apple { width: 26px; height: 31px; margin: -5px 0 0 40px; }
  .app-name { font-weight: 700; letter-spacing: .35px; }
  .clock { letter-spacing: .2px; }
  .status { display: grid; align-items: center; justify-items: center; grid-template-columns: 76px 82px 72px 68px 76px 60px 86px 72px 62px 68px 54px; }
  .siri { width: 28px; height: 28px; border-radius: 50%; background: radial-gradient(circle at 58% 48%, #fff 0, #9fd9f2 16%, transparent 38%), conic-gradient(from 0deg, #a33a6c, #2b9ab5 22%, #1556b5 45%, #123a7c 58%, #37a36c 75%, #c72e5f 88%, #a33a6c); }

  .rear { flex: none; height: 1471px; margin-top: 1px; background: #36393b; border-radius: 22px 22px 24px 24px; padding-top: 9px; border: solid #000; border-width: 1px 0 0; box-shadow: inset 0 2px 0 #666b6e; overflow: hidden; }
  .window { height: 1461px; border-top: 1px solid #000; border-radius: 22px 22px 24px 24px; background: #212121; box-shadow: inset 0 3px 0 -1px #77797a, inset 1px 0 0 #4a4a4a, inset -1px 0 0 #4a4a4a; display: flex; flex-direction: column; overflow: hidden; }
  .toolbar { height: 104px; flex: none; display: flex; align-items: center; padding: 0 0 1px 40px; }
  .lights { display: flex; gap: 16px; width: 156px; }
  .lights i { width: 24px; height: 24px; border-radius: 50%; }
  .r { background: #ff5450; } .y { background: #feb53d; } .g { background: #0cc544; }
  .toolbar .sidebar { width: 40px; height: 30px; margin-top: -2px; }
  .sep { width: 2px; height: 36px; background: #363636; margin: 0 10px 0 12px; }
  .chev { width: 14px; height: 10px; margin-left: 1px; }
  .back { width: 17px; height: 29px; margin: -2px 0 0 52px; }
  .fwd { width: 17px; height: 29px; margin: -2px 0 0 55px; }
  .shield { width: 28px; height: 33px; margin: -1px 0 0 287px; }
  .url { width: 1033px; height: 56px; margin-left: 32px; border: 2px solid #3d3d3d; border-radius: 13px; display: flex; align-items: center; padding: 4px 10px 0 462px; justify-content: space-between; color: #fff; font-size: 26px; letter-spacing: -.2px; -webkit-text-stroke: .3px; }
  .url svg { width: 24px; height: 28px; margin-top: -5px; }
  .share { width: 30px; height: 38px; margin: -5px 0 0 547px; }
  .plus { width: 28px; height: 28px; margin: -2px 0 0 44px; }
  .gridico { width: 32px; height: 31px; margin: -1px 0 0 44px; }

  .tabs { height: 57px; flex: none; display: grid; grid-template-columns: 638px 640px 642px 640px; border-bottom: 2px solid #000; }
  .tab { display: flex; align-items: center; justify-content: center; gap: 8px; background: #121212; color: #7f7f7f; font-size: 22px; border-top: 2px solid #000; border-left: 1px solid #333; padding-left: 1px; white-space: nowrap; -webkit-text-stroke: .2px; }
  .tab.active { background: #212121; color: #fff; border-color: transparent; font-weight: 500; gap: 10px; padding-left: 2px; }
  .search-tab { padding: 0 8px 0 0; }
  .t3 { letter-spacing: -.18px; }

  .page { flex: 1; color: #212529; font: 24px/36px "Open Sans", "Noto Sans", sans-serif; -webkit-text-stroke: .3px; padding: 0 308px;
    background: radial-gradient(ellipse 110px 70px at 0 100%, #fcfcfc, transparent), radial-gradient(ellipse 110px 70px at 100% 100%, #fcfcfc, transparent), linear-gradient(#fcfcfc, #fcfcfc calc(100% - 80px), #eaeaea calc(100% - 20px), #dfdfdf); }
  .container { display: flex; flex-direction: column; }
  nav { height: 106px; border: 2px solid #d9d9d9; border-top: 0; background: #fff; display: flex; align-items: center; gap: 24px; padding: 0 13px 0 12px; color: #777; }
  .account { margin-left: auto; display: flex; align-items: center; gap: 12px; }
  .caret { border: 7px solid transparent; border-top-color: #777; border-bottom: 0; margin-top: -3px; }
  .upload { width: 495px; height: 58px; margin: 84px 0 71px -18px; border: 2px solid #0079a5; border-radius: 6px; background: linear-gradient(#0091ca, #0086b7); color: #fff; font: inherit; padding: 0 0 2px; }
  h4 { font-weight: 400; font-size: 36px; line-height: 43px; margin: 0 0 11px; }
  h2 { font-weight: 400; font-size: 48px; line-height: 58px; margin: 0 0 11px; }
  .filters { display: flex; justify-content: space-between; align-items: center; height: 47px; margin-bottom: 10px; }
  label { display: flex; align-items: center; gap: 6px; }
  .select { width: 108px; height: 47px; border: 2px solid #b3b3b3; border-radius: 5px; display: flex; align-items: center; justify-content: space-between; padding: 0 22px 0 12px; font-size: 21px; }
  .select svg { width: 16px; height: 10px; }
  .search { gap: 11px; }
  input { width: 324px; height: 47px; border: 2px solid #b3b3b3; border-radius: 5px; background: transparent; margin: 0; }
  table { border-collapse: separate; border-spacing: 0; table-layout: fixed; width: 1944px; }
  th, td { height: 62px; padding: 0 12px 2px; text-align: left; border-bottom: 2px solid #c5c5c5; }
  thead th:nth-child(1) { width: 292px; }
  thead th:nth-child(2) { width: 459.500px; }
  thead th:nth-child(3) { width: 621.500px; }
  .th { display: flex; justify-content: space-between; align-items: center; }
  .th svg { width: 28px; height: 20px; margin-right: 2px; }
  .info { display: flex; justify-content: space-between; height: 73px; padding-top: 12px; }
  .showing { margin-top: 17px; }
  .pages { list-style: none; margin: 0; padding: 0; display: flex; color: #e62117; }
  .pages li { height: 58px; width: 54px; margin-left: -2px; border: 2px solid #ebebeb; background: #fff; text-align: center; line-height: 52px; padding-right: 1px; }
  .pages li:first-child { border-radius: 6px 0 0 6px; margin-left: 0; }
  .pages li:last-child { border-radius: 0 6px 6px 0; border-left-width: 0; }
  .pages .prev { width: 138px; padding-right: 2px; }
  .pages .next { width: 93px; padding: 0; }
  .pages .muted { color: #b4b4b4; }
  .pages .current { background: #e62117; border-color: #e62117; color: #fff; z-index: 1; padding: 0; }
  .pages .focus { box-shadow: 0 0 0 6px rgba(230, 33, 23, .26); }
  .small li:first-child { width: 52px; }
  .small li:last-child { width: 53px; padding: 0 0 0 1px; }
  footer { margin-top: 95px; text-align: center; }

  .desk { flex: none; height: 80px; display: grid;
    background: linear-gradient(#000 0, transparent 14px), linear-gradient(90deg, #1b1917 0, #221e1b 20%, #3a3027 25%, #8d7c63 34%, #b3a68e 42%, #cfc6b2 52%, #bdb29d 66%, #8c806f 76%, #7d7163 88%, #4a423b 95%, #2a2625 97%); }
  .wood { grid-area: 1 / 1; width: 2560px; height: 80px; opacity: .6; }
  .dock { grid-area: 1 / 1; width: 2498px; height: 66px; margin: 4px 0 0 31px; border: 2px solid #3e3e3e; border-radius: 16px; background: #1e1e1e; padding-left: 3px; display: flex; z-index: 1; }
  .dock-item { width: 47.930px; height: 62px; display: flex; flex-direction: column; align-items: center; padding-top: 8px; }
  .dock-art { width: 40px; height: 40px; }
  .dock-art :global(text) { font-family: Inter, sans-serif; }
  .dot { width: 6px; height: 6px; border-radius: 50%; margin-top: 6px; }
  .dot.on { background: #9a9a9a; }
  .rule { flex: none; width: 2px; height: 46px; margin: 8px 9px 0 10px; background: #4b4b4b; }
  .rule.wide { margin: 8px 10px 0; }
</style>
